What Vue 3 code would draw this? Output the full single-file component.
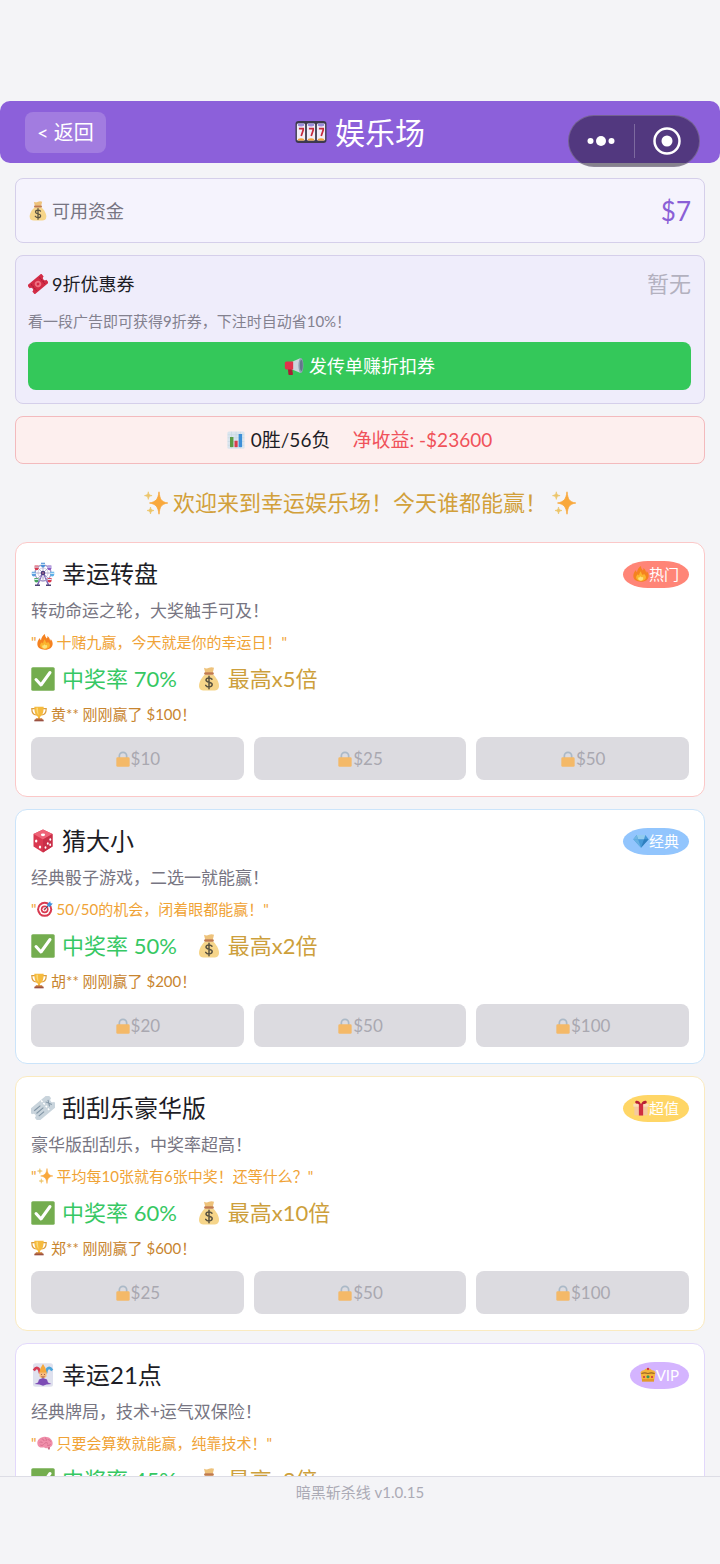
<script setup>
const games = [
  { theme: 'red', icon: 'wheel', name: '幸运转盘', tagIcon: 'fire', tag: '热门', desc: '转动命运之轮，大奖触手可及！', tipIcon: 'fire', tip: '十赌九赢，今天就是你的幸运日！', rate: 70, max: 5, who: '黄', won: 100, bets: [10, 25, 50] },
  { theme: 'blue', icon: 'dice', name: '猜大小', tagIcon: 'gem', tag: '经典', desc: '经典骰子游戏，二选一就能赢！', tipIcon: 'target', tip: '50/50的机会，闭着眼都能赢！', rate: 50, max: 2, who: '胡', won: 200, bets: [20, 50, 100] },
  { theme: 'gold', icon: 'pass', name: '刮刮乐豪华版', tagIcon: 'gift', tag: '超值', desc: '豪华版刮刮乐，中奖率超高！', tipIcon: 'sparkles', tip: '平均每10张就有6张中奖！还等什么？', rate: 60, max: 10, who: '郑', won: 600, bets: [25, 50, 100] },
  { theme: 'violet', icon: 'joker', name: '幸运21点', tagIcon: 'crown', tag: 'VIP', desc: '经典牌局，技术+运气双保险！', tipIcon: 'brain', tip: '只要会算数就能赢，纯靠技术！', rate: 45, max: 3, who: '林', won: 300, bets: [50, 100, 200] }
]
const cabins = [
  { x: 12, y: 2.5, c: '#4a8fd6' }, { x: 18.4, y: 5.2, c: '#8e5bc4' }, { x: 21.2, y: 11.5, c: '#5ab0e8' },
  { x: 18.6, y: 17.6, c: '#d8384e' }, { x: 5.4, y: 17.6, c: '#45a35c' }, { x: 2.8, y: 11.5, c: '#5a9ee0' }, { x: 5.6, y: 5.2, c: '#d8384e' }
]
</script>

<template>
  <div class="page">
    <svg class="defs" aria-hidden="true">
      <symbol id="slot" viewBox="0 0 32 24">
        <rect x="0.5" y="1" width="31" height="22" rx="3" fill="#3d3a4c" />
        <g v-for="n in 3" :key="n" :transform="`translate(${(n - 1) * 10 + 1.9} 0)`">
          <rect x="0" y="3.5" width="8.2" height="17" rx="1.2" fill="#f1edf7" />
          <path d="M1 3.500h6.200v2.200q-3 1.600-6.200 0z" fill="#9c8ddc" />
          <path d="M1 20.500h6.200v-1.600q-3-1.400-6.200 0z" fill="#f2a33c" />
          <path d="M2 8.700h4.300v1.400L4.300 16" fill="none" stroke="#c5283d" stroke-width="1.700" />
        </g>
      </symbol>
      <symbol id="bag" viewBox="0 0 24 24">
        <path d="M8 7.500h8c3 2.600 6 7.300 6 11.200 0 3.600-2.200 4.800-5 4.800H7c-2.800 0-5-1.200-5-4.800C2 14.800 5 10.100 8 7.500z" fill="#f6d58a" />
        <path d="M7 .8q2.500 1.200 5 0t5 0l-1.200 5H8.200z" fill="#eec27a" />
        <rect x="7.200" y="5.300" width="9.600" height="2.400" rx="1.200" fill="#c07a4e" />
        <path d="M15 12.200c-.7-1-1.700-1.300-3-1.300-1.800 0-3 .8-3 2.200 0 3 6.200 1.500 6.200 4.500 0 1.500-1.400 2.300-3.200 2.300-1.500 0-2.600-.5-3.300-1.600M12 9.200v12.600" fill="none" stroke="#5a5340" stroke-width="1.500" stroke-linecap="round" />
      </symbol>
      <symbol id="ticket" viewBox="0 0 24 24">
        <g transform="rotate(-40 12 12)">
          <path d="M1 5h22v4.500a2.500 2.500 0 0 0 0 5V19H1v-4.500a2.500 2.500 0 0 0 0-5z" fill="#d32c46" />
          <path d="M5.500 7v10M18.500 7v10" stroke="#a51b34" stroke-width="1.200" stroke-dasharray="2 1" />
          <circle cx="12" cy="12" r="3.800" fill="#ef7282" /><circle cx="12" cy="12" r="1.700" fill="#d32c46" />
        </g>
      </symbol>
      <symbol id="horn" viewBox="0 0 24 24">
        <path d="M4.500 13h5l1.200 8.500a1 1 0 0 1-1 1.200H6.300a1 1 0 0 1-1-.9z" fill="#a81f34" />
        <path d="M9 7.300 20 2.500v17.800L9 15.800z" fill="#ccd4df" />
        <ellipse cx="20.300" cy="11.400" rx="3" ry="9" fill="#8fa0b3" /><ellipse cx="20.800" cy="11.400" rx="1.700" ry="6.500" fill="#63768b" />
        <path d="M3 6.500h8v9.600H3a2 2 0 0 1-2-2V8.500a2 2 0 0 1 2-2z" fill="#e0334b" />
      </symbol>
      <symbol id="chart" viewBox="0 0 24 24">
        <rect x=".5" y=".5" width="23" height="23" rx="2" fill="#dbe5ee" />
        <path d="M1 5h22M1 9h22M1 14h22M1 19h22M6 1v22M12 1v22M18 1v22" stroke="#c2d2de" stroke-width=".7" />
        <path d="M4 8h4.600v13.500H4z" fill="#5c9a45" /><path d="M10 13h4.200v8.500H10z" fill="#d93c4e" /><path d="M15.500 4h4.600v17.500h-4.600z" fill="#3c8fd8" />
      </symbol>
      <symbol id="sparkles" viewBox="0 0 24 24">
        <path d="M15 .8C16 8.300 17 10.800 23.800 12 17 13.200 16 15.700 15 23.200 14 15.700 12 13.200 5.500 12 12 10.800 14 8.300 15 .8z" fill="#f9a83c" stroke="#f9a83c" stroke-width=".8" stroke-linejoin="round" />
        <path d="M4.300.8c.5 2.700 1.100 3.300 3.800 3.800-2.700.5-3.300 1.100-3.800 3.800C3.800 5.700 3.200 5.100.5 4.600c2.700-.5 3.300-1.100 3.800-3.800zM6.500 16c.5 2.500 1 3 3.500 3.500-2.500.5-3 1-3.500 3.500-.5-2.500-1-3-3.500-3.500 2.500-.5 3-1 3.500-3.500z" fill="#ecc56a" stroke="#ecc56a" stroke-width=".7" />
      </symbol>
      <symbol id="wheel" viewBox="0 0 24 24">
        <path d="m11.500 11-5 12M12.500 11l5 12" stroke="#7b63b8" stroke-width="1.500" /><path d="M4 23.200h5M15 23.200h5" stroke="#4e4675" stroke-width="1.500" />
        <circle cx="12" cy="11" r="8" fill="none" stroke="#a39ac8" stroke-width="1.300" />
        <circle cx="12" cy="11" r="5" fill="none" stroke="#c5bfdc" stroke-width=".8" />
        <path d="M12 3v16M4 11h16M6.300 5.300l11.400 11.400M17.700 5.300 6.300 16.700" stroke="#a8a0c8" stroke-width=".8" />
        <g v-for="c in cabins" :key="`${c.x}-${c.y}`" :transform="`translate(${c.x} ${c.y})`">
          <path d="M-2-1.700h4V1a2 2 0 0 1-4 0z" :fill="c.c" /><path d="M-2-.7h4v1.100h-4z" fill="#d9ecf8" />
        </g>
        <circle cx="12" cy="11" r="2.300" fill="#4a3c7c" /><circle cx="12" cy="11" r=".8" fill="#e98c9b" />
      </symbol>
      <symbol id="fire" viewBox="0 0 24 24">
        <path d="M4.500 6c.3 2 .6 2.700 1.500 3.500C6.500 5 9 1.800 12 0c-.3 3 1.200 4.800 2.800 6.800.8-1 1-2.300.8-3.800 2.400 1.800 3.700 4.200 4 7 .7-.6 1-1.500 1-2.500 1.900 2.300 2.900 4.500 2.900 7 0 5.500-4.800 9-11.500 9S.5 20.500.5 15c0-3.500 1.500-6.500 4-9z" fill="#f58220" />
        <path d="M7.500 12.500c.6 1 .8 1.300 1.600 1.800C9.300 11.500 10.500 9.500 12 8c0 2.600 1.500 4 2.800 5.800.8-.4 1.200-1.100 1.400-2 2.400 2.200 3.500 4 3.200 6-.3 3-3.300 4.700-7.400 4.700S5 20.500 4.700 17.800c-.2-2 .8-3.700 2.800-5.300z" fill="#fbb52e" />
        <path d="M8.200 17c1.200.6 2 .2 3-1.700.9 1.500 1.900 2.200 3.800 1.200 1.200 3-.3 5.500-3.300 5.500s-4.700-2-3.500-5z" fill="#fde17a" />
      </symbol>
      <symbol id="check" viewBox="0 0 24 24">
        <rect x=".3" y=".3" width="23.400" height="23.400" rx="1.500" fill="#74ad4f" /><path d="m5 12.500 5 5.500 9-12.500" fill="none" stroke="#fff" stroke-width="3" stroke-linecap="round" stroke-linejoin="round" />
      </symbol>
      <symbol id="trophy" viewBox="0 0 24 24">
        <path d="M6 4H1.200c0 6 2 9 6.800 9.500M18 4h4.800c0 6-2 9-6.800 9.500" fill="none" stroke="#dc9d3b" stroke-width="1.800" />
        <path d="M5 1h14c0 8-1.500 13-5.500 15v3h-3v-3C6.500 14 5 9 5 1z" fill="#f6bb3e" /><path d="M8 2.500h2.500c0 5 .3 8 1.200 11C9 11.500 8 8 8 2.500z" fill="#fbd978" />
        <path d="M7.500 18.500h9L18 21H6z" fill="#c87b39" /><path d="M5 20.500h14V23H5z" fill="#9b5141" />
      </symbol>
      <symbol id="lock" viewBox="0 0 24 24">
        <path d="M6.500 12V7.500a5.500 5.500 0 0 1 11 0V12" fill="none" stroke="#abb9c7" stroke-width="2.600" /><rect x="2" y="9.500" width="20" height="14.300" rx="2" fill="#f4b968" />
      </symbol>
      <symbol id="dice" viewBox="0 0 24 24">
        <path d="M12 .5 21.500 5v12.500L12 23.500l-9.500-6V5z" fill="#d93850" /><path d="M12 .5 21.500 5 12 10.500 2.500 5z" fill="#ee6377" /><path d="m12 10.500 9.500-5.500v12.500L12 23.500z" fill="#c92f48" />
        <g fill="#fff"><ellipse cx="12" cy="5.800" rx="2.100" ry="1.400" /><ellipse cx="5.200" cy="12" rx="1.200" ry="1.600" /><ellipse cx="9" cy="18" rx="1.200" ry="1.600" /><ellipse cx="19.300" cy="10.500" rx=".9" ry="1.300" /><ellipse cx="16.800" cy="14.500" rx=".9" ry="1.300" /><ellipse cx="19.200" cy="15.800" rx=".9" ry="1.300" /><ellipse cx="14.500" cy="18.500" rx=".9" ry="1.300" /></g>
      </symbol>
      <symbol id="gem" viewBox="0 0 24 24">
        <path d="M5.500 3h13L23.500 9.500 12 22 .5 9.500z" fill="#4699d8" /><path d="M5.500 3h13L16.500 9.500h-9z" fill="#91cbee" /><path d="M.5 9.500h7L12 22z" fill="#67b1e3" /><path d="M16.500 9.500h7L12 22z" fill="#2f7fbf" /><path d="m5.500 3 2 6.500h-7z" fill="#70b6e4" />
      </symbol>
      <symbol id="target" viewBox="0 0 24 24">
        <circle cx="11.500" cy="12.500" r="11.300" fill="#d83a50" /><circle cx="11.500" cy="12.500" r="8.300" fill="#fff" /><circle cx="11.500" cy="12.500" r="5.800" fill="#d83a50" /><circle cx="11.500" cy="12.500" r="3.300" fill="#fff" /><circle cx="11.500" cy="12.500" r="1.600" fill="#d83a50" />
        <path d="m11.500 12.500 7-7" stroke="#44546a" stroke-width="1.400" /><path d="M15.500 4.500 19.800.5l.7 2.800 3.200.6-4.300 4.600-3.900-.5z" fill="#3e92dc" />
      </symbol>
      <symbol id="pass" viewBox="0 0 24 24">
        <g transform="rotate(-40 12 12)">
          <path d="M1 4.500h22a1.500 1.500 0 0 1 1.500 1.500v3.800a2.200 2.200 0 0 0 0 4.400V18a1.500 1.500 0 0 1-1.500 1.500H1A1.500 1.500 0 0 1-.5 18v-3.800a2.200 2.200 0 0 0 0-4.400V6A1.500 1.500 0 0 1 1 4.500z" fill="#c9d4dc" />
          <path d="M3.500 8.500h8M3.500 12h9M3.500 15.500h7" stroke="#8295a5" stroke-width="1.100" /><path d="M15.500 5v14" stroke="#fff" stroke-width="1.500" stroke-dasharray="2 1.500" /><path d="m18 9 3 6M21 9l-3 6" stroke="#8295a5" />
        </g>
      </symbol>
      <symbol id="gift" viewBox="0 0 24 24">
        <path d="M2 9h20v14H2z" fill="#f5c9a0" /><path d="M.5 5.500h23V10H.5z" fill="#fbdcb8" /><path d="M8.800 6h6.400v17.300H8.800z" fill="#cf2c40" /><path d="M12 6.500C9.500 0 3 .3 3.300 3.500 3.500 6 8 6.500 12 6.500s8.500-.5 8.700-3C21 .3 14.500 0 12 6.500z" fill="#b81f35" />
      </symbol>
      <symbol id="joker" viewBox="0 0 24 24">
        <rect x="2" y=".3" width="20" height="23.400" rx="2.500" fill="#dfe1ee" />
        <path d="M9 10.500C8.500 4.500 5.500 3 2.800 7.500" fill="none" stroke="#d63c53" stroke-width="2.600" />
        <path d="M15 10.500c.5-6 3.500-7.500 6.200-3" fill="none" stroke="#4aa5da" stroke-width="2.600" />
        <path d="M8 10.500Q9 4.500 12 1q3 3.500 4 9.500z" fill="#f5a83c" /><path d="M8.500 9.500h7v4q-3.500 4-7 0z" fill="#f5bb7d" /><path d="M10 11.500h.8M13.200 11.500h.8M10.500 13.700q1.500 1 3 0" stroke="#8b3d37" stroke-width=".9" fill="none" />
        <path d="m12 15 4 1.500 1 3 3.500 1.500-5 .5-3.500 1.300L8.500 21.500l-5-.5L7 19.500l1-3z" fill="#7c4bb5" />
      </symbol>
      <symbol id="crown" viewBox="0 0 24 24">
        <path d="M3 21 .8 8q2-3.500 5.200-3 2-3 6-3t6 3q3.200-.5 5.200 3L21 21z" fill="#f4b53a" /><path d="M2 9q5-2.500 10 0 5-2.500 10 0v1.600q-5-1.500-10 0-5-1.500-10 0z" fill="#9a6424" /><path d="M3 18h18v4H3z" fill="#e39a2a" />
        <circle cx="12" cy="14.500" r="2.300" fill="#37965a" /><circle cx="6" cy="15" r="1.600" fill="#cf3345" /><circle cx="18" cy="15" r="1.600" fill="#cf3345" /><circle cx="12" cy="3" r="1.700" fill="#cf3345" />
      </symbol>
      <symbol id="brain" viewBox="0 0 24 24">
        <path d="M15.500 15.500h3.800c.8 3 .3 5.500-1.300 7-1.500-.8-2.500-3-2.500-7z" fill="#c96b85" />
        <path d="M.5 13C0 7 5 3 11 2.500c7-.5 12.500 4 12.500 10 0 4-3 6.500-6.500 6-2 2-5 1.500-6.500 0C5.500 19.500 1 18 .5 13z" fill="#f08eaa" />
        <path d="M4 11c2-1 3.500-.5 4.500 1M7 6c2 0 3.500 1 3.500 3M12 4c2 1 2.500 3 1.500 5M16 7c2 0 4 1 4.500 3M11 13c2-2 4-2 5.500 0M5 15c2 1 4 .5 5-1M15 15c2 1 4 .5 5.500-1" fill="none" stroke="#cf6786" stroke-width="1.200" />
      </symbol>
    </svg>

    <header class="bar">
      <button class="back" type="button">&lt; 返回</button>
      <h1><svg class="slot" aria-hidden="true"><use href="#slot" /></svg>娱乐场</h1>
      <div class="capsule">
        <button type="button" aria-label="更多">
          <svg viewBox="0 0 28 28"><g fill="#fff"><circle cx="3.500" cy="14" r="3" /><circle cx="14" cy="14" r="5" /><circle cx="24.500" cy="14" r="3" /></g></svg>
        </button>
        <button type="button" aria-label="关闭">
          <svg viewBox="0 0 28 28"><circle cx="14" cy="14" r="12.500" fill="none" stroke="#fff" stroke-width="2.500" /><circle cx="14" cy="14" r="5.500" fill="#fff" /></svg>
        </button>
      </div>
    </header>

    <main>
      <section class="panel funds">
        <span class="label"><svg class="i20" aria-hidden="true"><use href="#bag" /></svg>可用资金</span>
        <span class="money">$7</span>
      </section>

      <section class="panel coupon">
        <div class="coupon-head">
          <h2><svg class="i20" aria-hidden="true"><use href="#ticket" /></svg>9折优惠券</h2>
          <span class="none">暂无</span>
        </div>
        <p>看一段广告即可获得9折券，下注时自动省10%！</p>
        <button class="promo" type="button"><svg class="i20" aria-hidden="true"><use href="#horn" /></svg>发传单赚折扣券</button>
      </section>

      <section class="panel record">
        <span class="tally"><svg class="i18" aria-hidden="true"><use href="#chart" /></svg>0胜/56负</span>
        <span class="net">净收益: -$23600</span>
      </section>

      <p class="welcome">
        <svg class="i24" aria-hidden="true"><use href="#sparkles" /></svg>
        <span>欢迎来到幸运娱乐场！今天谁都能赢！</span>
        <svg class="i24" aria-hidden="true"><use href="#sparkles" /></svg>
      </p>

      <article v-for="g in games" :key="g.name" class="game" :class="g.theme">
        <div class="game-head">
          <h2><svg class="i24" aria-hidden="true"><use :href="'#' + g.icon" /></svg>{{ g.name }}</h2>
          <span class="tag"><svg class="i16" aria-hidden="true"><use :href="'#' + g.tagIcon" /></svg>{{ g.tag }}</span>
        </div>
        <p class="desc">{{ g.desc }}</p>
        <p class="tip">"<svg class="i16" aria-hidden="true"><use :href="'#' + g.tipIcon" /></svg>{{ g.tip }}"</p>
        <div class="odds">
          <span class="rate"><svg class="i24" aria-hidden="true"><use href="#check" /></svg>中奖率 {{ g.rate }}%</span>
          <span class="max"><svg class="i24" aria-hidden="true"><use href="#bag" /></svg>最高x{{ g.max }}倍</span>
        </div>
        <p class="winner"><svg class="i16" aria-hidden="true"><use href="#trophy" /></svg>{{ g.who }}** 刚刚赢了 ${{ g.won }}！</p>
        <div class="bets">
          <button v-for="b in g.bets" :key="b" type="button" disabled><svg class="i16" aria-hidden="true"><use href="#lock" /></svg>${{ b }}</button>
        </div>
      </article>
    </main>

    <footer>暗黑斩杀线 v1.0.15</footer>
  </div>
</template>

<style>
body { background: #f4f4f7; }
</style>

<style scoped>
.page {
  box-sizing: border-box;
  height: 100vh;
  padding-top: 101px;
  display: flex;
  flex-direction: column;
  background: #f4f4f7;
  color: #1d1d26;
  font-family: Lato, "Noto Sans CJK SC", sans-serif;
  font-weight: 400;
  line-height: 24px;
}
.defs { position: absolute; width: 0; height: 0; }
.page * { box-sizing: border-box; }
h1, h2, p { margin: 0; font-weight: inherit; }
button { font: inherit; border: 0; padding: 0; margin: 0; color: inherit; }
svg { flex: none; display: block; }
.i16 { width: 16px; height: 16px; }
.i18 { width: 18px; height: 18px; }
.i20 { width: 20px; height: 20px; }
.i24 { width: 24px; height: 24px; }

.bar {
  position: relative;
  flex: none;
  display: grid;
  grid-template-columns: 1fr auto 1fr;
  align-items: center;
  height: 62px;
  padding: 0 25px;
  border-radius: 10px;
  background: #8c60da;
  color: #fff;
}
.back {
  justify-self: start;
  height: 41px;
  padding: 0 12px;
  border-radius: 8px;
  background: #a27ce0;
  font-size: 20px;
}
h1 { display: flex; align-items: center; gap: 8px; font-size: 30px; line-height: 44px; }
.slot { width: 32px; height: 24px; }
.capsule {
  position: absolute;
  top: 14px;
  right: 20px;
  display: flex;
  align-items: center;
  width: 132px;
  height: 52px;
  border: 1px solid rgba(150, 140, 165, 0.5);
  border-radius: 26px;
  background: rgba(24, 16, 36, 0.5);
}
.capsule button { flex: 1; height: 34px; display: flex; align-items: center; justify-content: center; background: none; }
.capsule button + button { border-left: 1px solid rgba(255, 255, 255, 0.25); }
.capsule svg { width: 28px; height: 28px; }

main { flex: 1; min-height: 0; overflow: hidden; padding: 15px 15px 0; }
.panel { border: 1px solid #d5cfea; border-radius: 8px; padding: 0 13px 0 12px; margin-bottom: 12px; }
.funds { display: flex; align-items: center; justify-content: space-between; height: 65px; background: #f5f3fd; }
.label { display: flex; align-items: center; gap: 4px; font-size: 18px; color: #777582; }
.money { font-size: 26px; color: #8a5fd6; }
.coupon { padding-top: 12px; padding-bottom: 13px; background: #efedfb; }
.coupon-head { display: flex; align-items: center; justify-content: space-between; height: 32px; }
.coupon h2 { display: flex; align-items: center; gap: 4px; font-size: 18px; }
.none { font-size: 22px; color: #b3b1bf; }
.coupon p { margin: 9px 0; font-size: 15px; line-height: 24px; color: #83818f; }
.promo {
  display: flex; align-items: center; justify-content: center; gap: 5px;
  width: 100%; height: 48px; border-radius: 8px;
  background: #34c85a; color: #fff; font-size: 18px;
}
.record { display: flex; align-items: center; justify-content: center; gap: 22px; height: 48px; margin: 0; background: #fdefee; border-color: #f3babd; font-size: 19px; }
.tally { display: flex; align-items: center; gap: 6px; }
.net { color: #f0525a; }
.welcome { display: flex; align-items: center; justify-content: center; gap: 5px; height: 78px; font-size: 22px; color: #d2a03a; }

.game { margin-bottom: 12px; padding: 15px 15px 16px; border: 1px solid; border-radius: 12px; background: #fff; }
.red { border-color: #fbc8c8; --tag: #ff8577; }
.blue { border-color: #cbe4fa; --tag: #92c5fd; }
.gold { border-color: #faeac0; --tag: #ffd666; }
.violet { border-color: #e2d8fb; --tag: #d4b4ff; }
.game-head { display: flex; align-items: center; justify-content: space-between; height: 32px; }
.game h2 { display: flex; align-items: center; gap: 7px; font-size: 24px; }
.tag { display: flex; align-items: center; height: 27px; padding: 0 10px; border-radius: 26px / 14px; background: var(--tag); color: #fff; font-size: 15px; }
.desc { margin-top: 9px; font-size: 17px; line-height: 24px; color: #777582; }
.tip { display: flex; align-items: center; margin-top: 8px; font-size: 15px; line-height: 22px; color: #f0a336; }
.tip svg { margin-right: 4px; }
.odds { display: flex; gap: 20px; margin-top: 11px; font-size: 22px; line-height: 30px; }
.rate, .max { display: flex; align-items: center; gap: 7px; }
.rate { color: #36c863; }
.max { color: #cd9f3c; }
.winner { display: flex; align-items: center; gap: 4px; margin-top: 10px; font-size: 15px; line-height: 20px; color: #c8852f; }
.bets { display: flex; gap: 10px; margin-top: 13px; }
.bets button { flex: 1; display: flex; align-items: center; justify-content: center; height: 43px; border-radius: 8px; background: #dcdbe0; color: #a9a8b0; font-size: 17px; }

footer { flex: none; height: 88px; padding-top: 4px; border-top: 1px solid #dddde6; text-align: center; font-size: 15px; line-height: 22px; color: #abaab5; }
</style>
